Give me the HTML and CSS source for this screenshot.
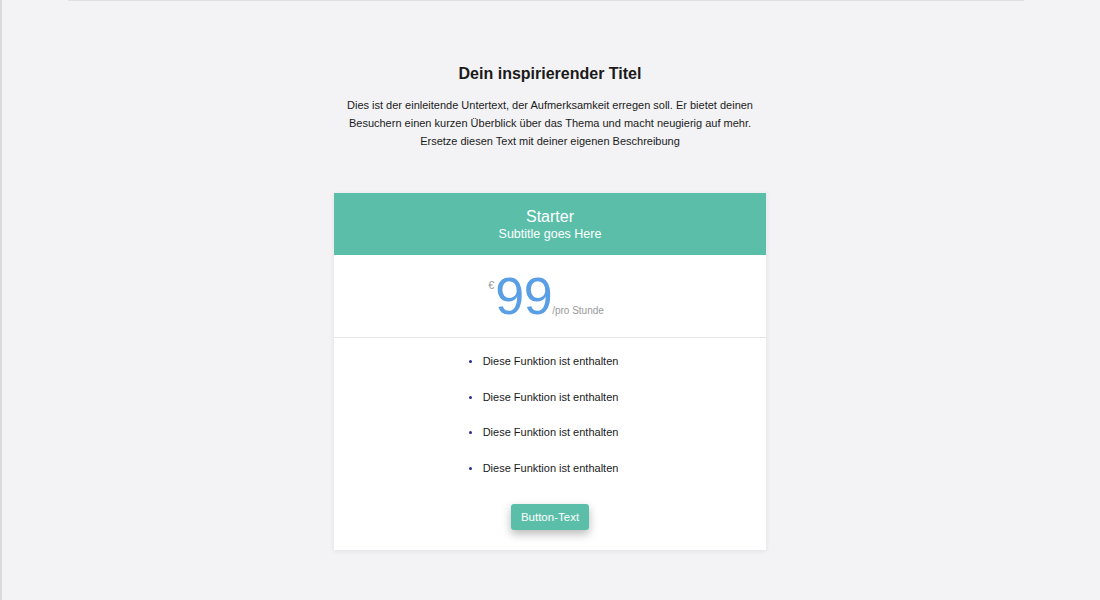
FILE: index.html
```html
<!DOCTYPE html>
<html lang="de">

<head>
  <meta charset="UTF-8">
  <meta name="viewport" content="width=device-width, initial-scale=1.0">
  <title>Preise</title>
  <link rel="stylesheet" href="styles.css">
</head>

<body>
  <div class="page">
    <div class="top-rule"></div>

    <!-- Intro -->
    <section class="intro">
      <h1>Dein inspirierender Titel</h1>
      <p>Dies ist der einleitende Untertext, der Aufmerksamkeit erregen soll. Er bietet deinen Besuchern einen kurzen Überblick über das Thema und macht neugierig auf mehr. Ersetze diesen Text mit deiner eigenen Beschreibung</p>
    </section>

    <!-- Pricing card -->
    <div class="plan">
      <div class="plan-head">
        <div class="plan-name">Starter</div>
        <div class="plan-sub">Subtitle goes Here</div>
      </div>
      <div class="plan-price">
        <span class="currency">€</span><span class="amount">99</span><span class="period">/pro Stunde</span>
      </div>
      <ul class="plan-features">
        <li>Diese Funktion ist enthalten</li>
        <li>Diese Funktion ist enthalten</li>
        <li>Diese Funktion ist enthalten</li>
        <li>Diese Funktion ist enthalten</li>
      </ul>
      <div class="plan-action">
        <a href="#" class="btn">Button-Text</a>
      </div>
    </div>
  </div>
</body>

</html>
```

FILE: styles.css
```css
body {
  font-family: 'Liberation Sans', Arial, sans-serif;
  background-color: #f3f3f5;
  margin: 0;
  color: #222;
  min-height: 100vh;
  border-left: 2px solid #dadadc;
}

.page {
  padding: 0 2px 40px 0;
}

.top-rule {
  height: 1px;
  margin: 0 74px 0 66px;
  background-color: #e0e0e4;
}

.intro {
  text-align: center;
  padding-top: 64px;
}

.intro h1 {
  font-size: 16px;
  margin: 0 0 13px;
  color: #1a1a1a;
}

.intro p {
  max-width: 420px;
  margin: 0 auto;
  font-size: 11px;
  line-height: 18px;
  color: #1a1a1a;
}

.plan {
  width: 432px;
  margin: 43px auto 0;
  background-color: #fff;
  box-shadow: 0 1px 5px rgba(0, 0, 0, 0.08);
}

.plan-head {
  background-color: #5bbea9;
  color: #fff;
  text-align: center;
  padding: 15px 0 13px;
}

.plan-name {
  font-size: 16px;
  line-height: 18px;
}

.plan-sub {
  font-size: 12.5px;
  line-height: 16px;
}

.plan-price {
  text-align: center;
  padding: 16px 8px 15px 0;
  border-bottom: 1px solid #e6e6e8;
  height: 51px;
  line-height: 51px;
}

.currency {
  font-size: 11px;
  color: #999;
  vertical-align: top;
  position: relative;
  top: -11px;
  margin-right: 1px;
}

.amount {
  font-size: 52px;
  color: #5a9fe6;
  letter-spacing: -0.5px;
}

.period {
  font-size: 10px;
  color: #999;
}

.plan-features {
  list-style: disc;
  margin: 0;
  padding: 13px 0 0;
}

.plan-features li {
  width: fit-content;
  margin: 0 auto;
  font-size: 11px;
  line-height: 20px;
  margin-bottom: 15.5px;
  color: #1a1a1a;
  padding-left: 1px;
}

.plan-features li::marker {
  color: #2a2a92;
  font-size: 10px;
}

.plan-action {
  text-align: center;
  padding: 11px 0 20px;
}

.btn {
  display: inline-block;
  padding: 0 10px;
  height: 26px;
  line-height: 26px;
  font-size: 11.5px;
  color: #fff;
  text-decoration: none;
  background-color: #5bbea9;
  border-radius: 3px;
  box-shadow: 0 4px 10px rgba(0, 0, 0, 0.28);
}
```
